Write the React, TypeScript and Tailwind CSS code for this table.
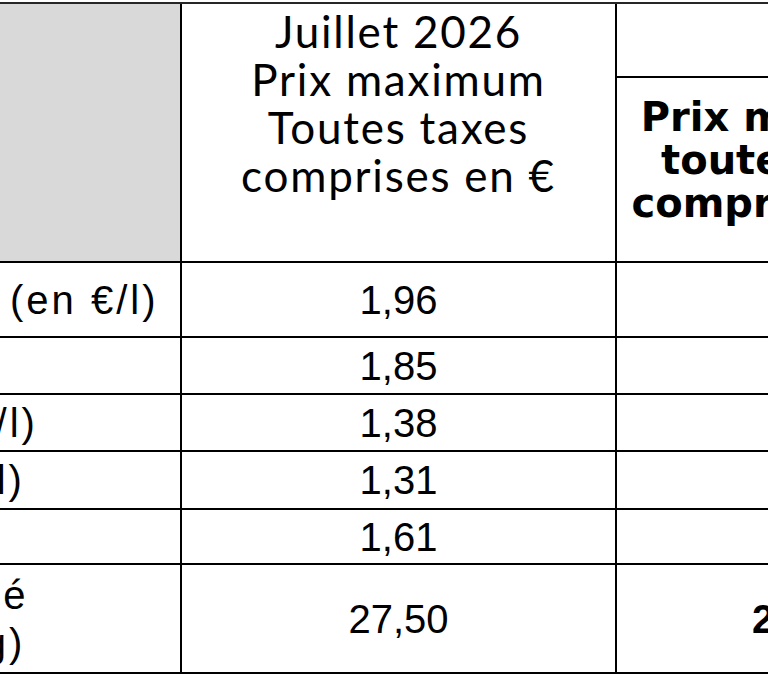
const head = "font-['Lato','Open_Sans',sans-serif]";
const bold = "font-['DejaVu_Sans','Noto_Sans',sans-serif]";
const body = "font-['Liberation_Sans',Arial,sans-serif]";

type Row = {
  label: string[];
  july: string;
  prev?: string;
  h: string;
};

const rows: Row[] = [
  { label: ["Supercarburant sans plomb (en €/l)"], july: "1,96", h: "h-[75px]" },
  { label: ["Gazole (en €/l)"], july: "1,85", h: "h-[57px]" },
  { label: ["Pétrole lampant (en €/l)"], july: "1,38", h: "h-[57px]" },
  { label: ["Gazole marine (en €/l)"], july: "1,31", h: "h-[58px]" },
  { label: ["Kérosène (en €/l)"], july: "1,61", h: "h-[55px]" },
  {
    label: ["Gaz de pétrole liquéfié", "(bouteilles de 12,5 kg)"],
    july: "27,50",
    prev: "27,60",
    h: "h-[109px]",
  },
];

export default function App() {
  return (
    <div className="h-[680px] w-[768px] overflow-hidden bg-white text-black">
      <div className="ml-[-592px] mt-[2px] grid w-max grid-cols-[774px_435px_372px] border-t-2 border-[#262626]">
        {/* header */}
        <div className="h-[259px] border-r-2 border-b-2 border-black bg-[#d9d9d9]" />
        <div
          className={`h-[259px] border-r-2 border-b-2 border-black pt-[3px] text-center text-[44px] leading-[48px] tracking-[0.04em] ${head}`}
        >
          Juillet 2026
          <br />
          Prix maximum
          <br />
          Toutes taxes
          <br />
          comprises en €
        </div>
        <div className="flex h-[259px] flex-col border-r-2 border-b-2 border-black">
          <div className="h-[74px] border-b-2 border-black" />
          <div className={`flex-1 pt-[18px] text-center text-[40px] font-bold leading-[43px] ${bold}`}>
            Prix maximum
            <br />
            toutes taxes
            <br />
            comprises en €
          </div>
        </div>

        {/* body rows */}
        {rows.map((r) => (
          <div key={r.july} className="contents">
            <div
              className={`flex items-center justify-center whitespace-nowrap border-r-2 border-b-2 border-black text-center text-[40px] leading-[48px] tracking-[3px] ${body} ${r.h}`}
            >
              <div>
                {r.label.map((l) => (
                  <div key={l}>{l}</div>
                ))}
              </div>
            </div>
            <div
              className={`flex items-center justify-center border-r-2 border-b-2 border-black text-[40px] leading-[46px] ${body} ${r.h}`}
            >
              {r.july}
            </div>
            <div
              className={`flex items-center justify-center border-r-2 border-b-2 border-black text-[40px] font-bold leading-[46px] ${body} ${r.h}`}
            >
              {r.prev}
            </div>
          </div>
        ))}
      </div>
    </div>
  );
}
